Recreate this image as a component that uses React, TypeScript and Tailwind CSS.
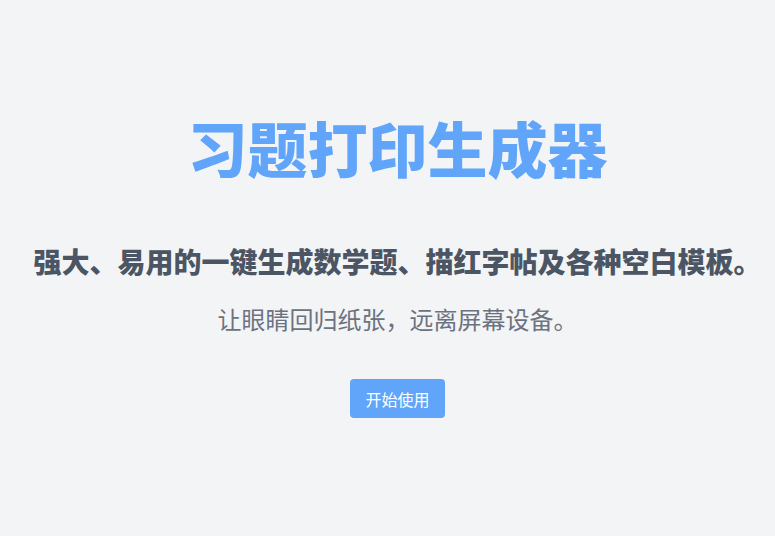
export default function App() {
  return (
    <div
      className="min-h-screen w-full bg-[#f3f4f6] flex flex-col items-center pl-5 pt-[117px]"
      style={{ fontFamily: '"Noto Sans CJK SC", "Noto Sans", sans-serif' }}
    >
      {/* 标题 */}
      <h1 className="text-[60px] leading-[60px] font-black text-[#60a5fa]">习题打印生成器</h1>

      {/* 副标题 */}
      <p className="mt-[70px] text-[28px] leading-[28px] font-black text-[#4b5563] whitespace-nowrap">
        强大、易用的一键生成数学题、描红字帖及各种空白模板。
      </p>
      <p className="mt-8 text-[24px] leading-[24px] text-[#6b7280]">让眼睛回归纸张，远离屏幕设备。</p>

      <button className="mt-12 w-[95px] h-[39px] rounded bg-[#60a5fa] text-white text-[16px]">开始使用</button>
    </div>
  );
}
